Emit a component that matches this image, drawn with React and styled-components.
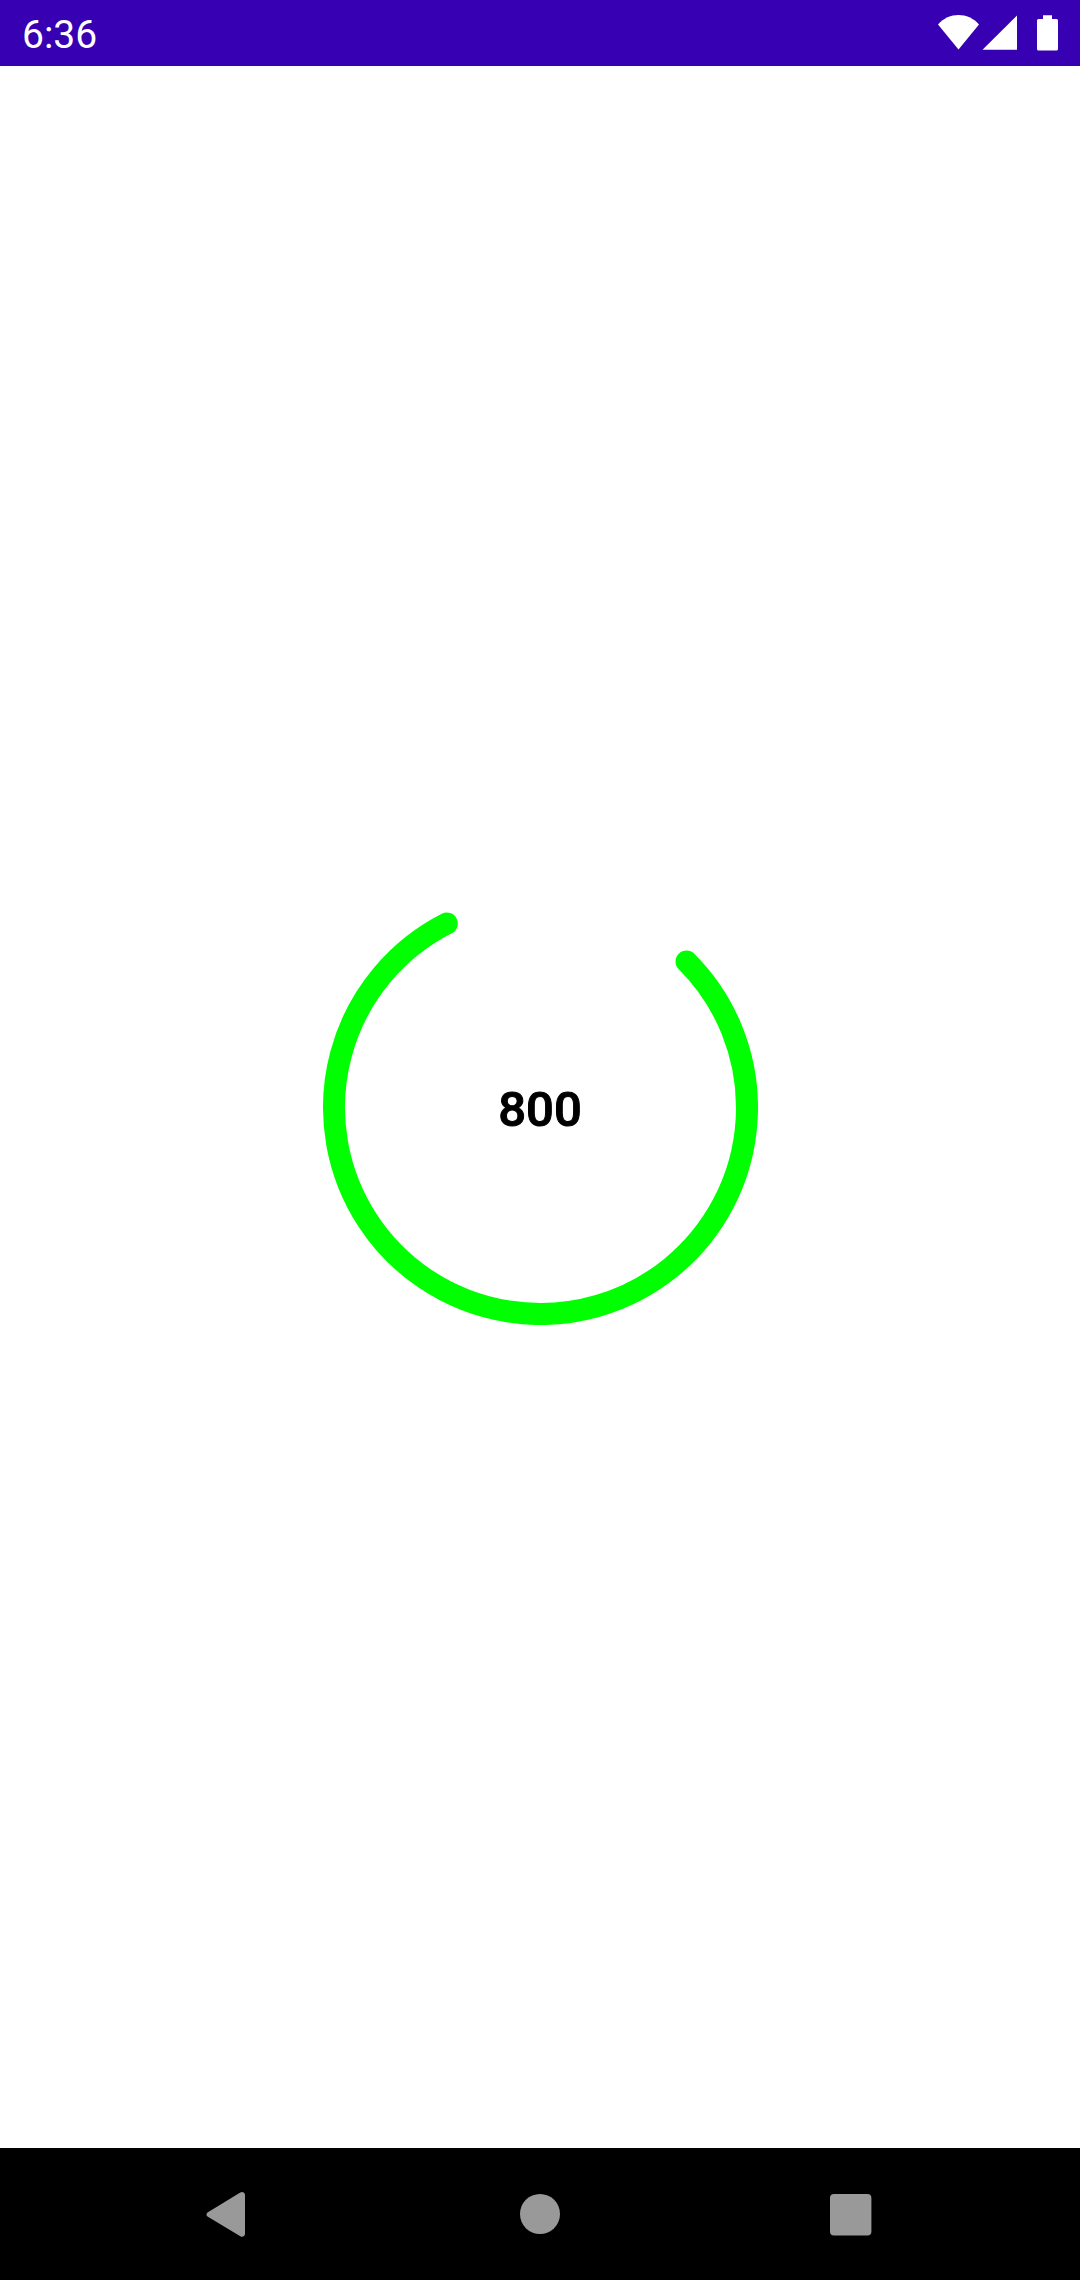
import React from 'react';
import styled, { createGlobalStyle } from 'styled-components';

const GlobalStyle = createGlobalStyle`
  *, *::before, *::after {
    box-sizing: border-box;
  }
  body {
    margin: 0;
    background: #ffffff;
    font-family: Roboto, 'Noto Sans', sans-serif;
  }
`;

const Screen = styled.div`
  display: flex;
  flex-direction: column;
  min-height: 100vh;
`;

const StatusBar = styled.header`
  display: flex;
  align-items: center;
  justify-content: space-between;
  height: 66px;
  padding: 0 22px;
  background: #3700b3;
  color: #ffffff;
`;

const Clock = styled.time`
  font-size: 39px;
  line-height: 46px;
  padding-top: 4px;
`;

const StatusIcons = styled.div`
  display: flex;
  align-items: center;
`;

const StatusIcon = styled.svg`
  display: block;
  width: ${({ $width }) => $width}px;
  height: 36px;
  margin-right: ${({ $gap = 0 }) => $gap}px;
  fill: currentColor;
`;

const Content = styled.main`
  flex: 1;
  display: grid;
  place-items: center;
`;

const Gauge = styled.div`
  display: grid;
  place-items: center;

  & > * {
    grid-area: 1 / 1;
  }
`;

const Ring = styled.svg`
  display: block;
  width: 436px;
  height: 436px;
  fill: none;
  stroke: #00ff00;
  stroke-width: 22;
  stroke-linecap: round;
`;

const Value = styled.span`
  color: #000000;
  font-size: 49px;
  font-weight: 500;
  line-height: 58px;
  padding-top: 6px;
  -webkit-text-stroke: 1px currentColor;
`;

const NavBar = styled.nav`
  display: flex;
  height: 132px;
  padding: 0 75px;
  background: #000000;
`;

const NavButton = styled.button`
  flex: 1;
  display: grid;
  place-items: center;
  padding: 0;
  border: 0;
  background: transparent;
  color: #999999;
  cursor: pointer;
`;

const NavIcon = styled.svg`
  display: block;
  width: 60px;
  height: 60px;
  fill: currentColor;
`;

const CENTER = 218.5;
const RADIUS = 206.5;
const START_ANGLE = -45;

function pointAt(angle) {
  const rad = (angle * Math.PI) / 180;
  return `${CENTER + RADIUS * Math.cos(rad)} ${CENTER + RADIUS * Math.sin(rad)}`;
}

function ProgressGauge({ value, max }) {
  const sweep = (value / max) * 360;
  const path = `M${pointAt(START_ANGLE)} A${RADIUS} ${RADIUS} 0 ${sweep > 180 ? 1 : 0} 1 ${pointAt(START_ANGLE + sweep)}`;
  return (
    <Gauge role="progressbar" aria-label="Progress" aria-valuemin={0} aria-valuemax={max} aria-valuenow={value}>
      <Ring viewBox="0 0 436 436" aria-hidden="true">
        <path d={path} />
      </Ring>
      <Value>{value}</Value>
    </Gauge>
  );
}

export default function App() {
  return (
    <>
      <GlobalStyle />
      <Screen>
        <StatusBar>
          <Clock dateTime="06:36">6:36</Clock>
          <StatusIcons>
            <StatusIcon $width={42} $gap={2} viewBox="0 0 42 36" aria-hidden="true">
              <path d="M20.5 34.5 L0 9.5 C5.5 3 13 0 20.5 0 C28 0 35.5 3 41 9.5 Z" />
            </StatusIcon>
            <StatusIcon $width={36} $gap={19} viewBox="0 0 36 36" aria-hidden="true">
              <path d="M0.5 34.7 L35 0.5 V34.7 Z" />
            </StatusIcon>
            <StatusIcon $width={21} viewBox="0 0 21 36" aria-hidden="true">
              <path d="M6 0.3 H15 V4 H19.5 Q21 4 21 5.5 V34 Q21 35.5 19.5 35.5 H1.5 Q0 35.5 0 34 V5.5 Q0 4 1.5 4 H6 Z" />
            </StatusIcon>
          </StatusIcons>
        </StatusBar>
        <Content>
          <ProgressGauge value={800} max={1000} />
        </Content>
        <NavBar>
          <NavButton type="button" aria-label="Back">
            <NavIcon viewBox="0 0 60 60">
              <path d="M7.5 28.4 L40.3 8.6 Q42.3 7.4 44 8.8 Q45 9.6 45 11 V49.8 Q45 51.2 44 52 Q42.3 53.4 40.3 52.2 L7.5 32.6 Q6.5 31.9 6.5 30.5 Q6.5 29.1 7.5 28.4 Z" />
            </NavIcon>
          </NavButton>
          <NavButton type="button" aria-label="Home">
            <NavIcon viewBox="0 0 60 60">
              <circle cx="30" cy="30" r="20" />
            </NavIcon>
          </NavButton>
          <NavButton type="button" aria-label="Recent apps">
            <NavIcon viewBox="0 0 60 60">
              <rect x="10" y="10" width="41.4" height="41.4" rx="4" />
            </NavIcon>
          </NavButton>
        </NavBar>
      </Screen>
    </>
  );
}
